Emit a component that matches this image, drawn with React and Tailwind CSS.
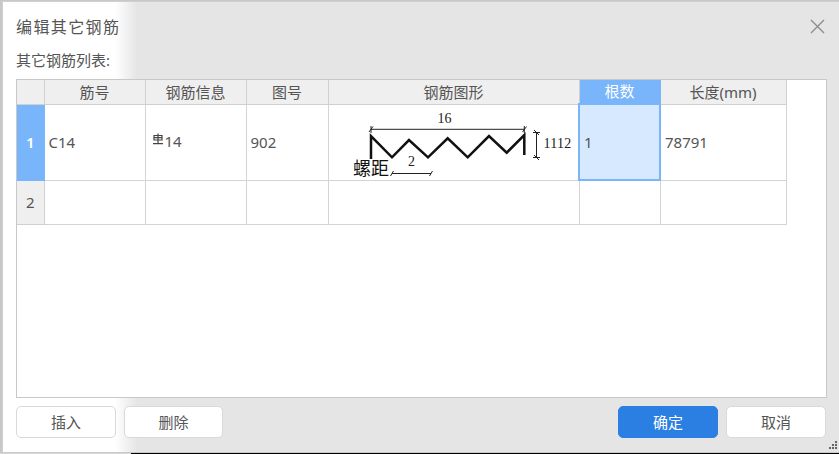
import React from "react";

const font = { fontFamily: '"Noto Sans", "Noto Sans CJK SC", sans-serif' };

const columns = [
  { label: "筋号", width: "w-[101px]" },
  { label: "钢筋信息", width: "w-[101px]" },
  { label: "图号", width: "w-[82px]" },
  { label: "钢筋图形", width: "w-[251px]" },
  { label: "根数", width: "w-[81px]", active: true },
  { label: "长度(mm)", width: "w-[126px]" },
];

const SteelMark = () => (
  <svg width="12" height="12" viewBox="0 0 12 12" className="mr-[1px] ml-[2px] mb-[4px] shrink-0" fill="none" stroke="#444" strokeWidth="1.2">
    <path d="M6 0.5V11M2 2.5H10V7H2V2.5ZM2 4.7H10M1 10.7H11" />
  </svg>
);

const RebarShape = () => (
  <svg viewBox="0 0 250 75" className="ml-[-1px] block h-[75px] w-[250px]" fill="none">
    <path d="M43 54V31L64 52.3L81 35L100 52.3L119.7 33.3L139.7 52.3L161 31L178.7 47.7L196.3 30V50" stroke="#111" strokeWidth="2.5" />
    <path d="M43 24.3H196.3M41 27L45 21.5M194.5 27L198.5 21.5M43 21V28M196.3 21V28" stroke="#222" strokeWidth="1" />
    <path d="M205 27.5H212M205 52.5H212M208.5 27.5V52.5M206 25L211 30M206 50L211 55" stroke="#222" strokeWidth="1" />
    <path d="M64 68.5H103M62.5 71L65.5 66M101.5 71L104.5 66" stroke="#222" strokeWidth="1" />
    <g fill="#222" style={{ fontFamily: '"Liberation Serif", serif' }} fontSize="14">
      <text x="109.5" y="18">16</text>
      <text x="215.5" y="42.5" letterSpacing="0.3">1112</text>
      <text x="80" y="61">2</text>
    </g>
    <text x="25" y="69.5" fill="#111" fontSize="18" style={{ fontFamily: '"Noto Sans CJK SC", sans-serif' }}>螺距</text>
  </svg>
);

const Button = ({ children, primary, className = "" }) => (
  <button
    className={`h-[32px] rounded-[5px] border text-[15px] ${
      primary ? "border-[#2b7fe3] bg-[#2b7fe3] text-white" : "border-[#d9d9d9] bg-white text-[#555]"
    } ${className}`}
  >
    {children}
  </button>
);

const cell = "border-r border-b border-[#d4d4d4] px-[4px] text-left text-[15px] text-[#555]";

export default function App() {
  return (
    <div className="flex h-[454px] w-[839px] flex-col overflow-hidden bg-[#c8c8c8] pt-[1px] pl-[2px]" style={font}>
      <div className="relative flex flex-1 flex-col border-t border-l border-[#d0d0d0] bg-[linear-gradient(90deg,#ffffff_0,#ffffff_112px,#e5e5e5_134px,#e5e5e5_100%)] pr-[13px] pl-[13px]">
        <div className="flex h-[47px] items-center justify-between pt-[2px]">
          <h1 className="text-[16px] tracking-[1.4px] text-[#555]">编辑其它钢筋</h1>
          <svg width="15" height="15" viewBox="0 0 15 15" className="mr-[1px]" fill="none" stroke="#8c8c8c" strokeWidth="1.4">
            <path d="M1 1L14 14M14 1L1 14" />
          </svg>
        </div>
        <p className="flex h-[30px] items-start text-[15px] leading-[22px] text-[#555]">其它钢筋列表:</p>

        <div className="h-[319px] w-[811px] border border-[#c8c8c8] bg-white">
          <table className="w-[769px] table-fixed border-collapse">
            <thead>
              <tr className="h-[24px]">
                <th className="w-[27px] border-r border-b border-[#d0d0d0] bg-[#efefef]" />
                {columns.map((col) => (
                  <th
                    key={col.label}
                    className={`${col.width} border-r border-b text-center text-[15px] font-normal ${
                      col.active
                        ? "border-[#78b5fb] bg-[#78b5fb] text-white"
                        : "border-[#d0d0d0] bg-[#efefef] text-[#555]"
                    }`}
                  >
                    {col.label}
                  </th>
                ))}
              </tr>
            </thead>
            <tbody>
              <tr className="h-[75px]">
                <td className="border-r border-b border-[#78b5fb] bg-[#78b5fb] text-center text-[15px] font-semibold text-white">1</td>
                <td className={cell}>C14</td>
                <td className={cell}>
                  <span className="flex items-center pb-[2px]">
                    <SteelMark />
                    14
                  </span>
                </td>
                <td className={cell}>902</td>
                <td className="border-r border-b border-[#d4d4d4] p-0">
                  <RebarShape />
                </td>
                <td className="border-2 border-[#78b5fb] bg-[#d6e9fe] px-[4px] text-[15px] text-[#555]">1</td>
                <td className={cell}>78791</td>
              </tr>
              <tr className="h-[44px]">
                <td className="border-r border-b border-[#d0d0d0] bg-[#efefef] text-center text-[15px] text-[#555]">2</td>
                <td className={cell} />
                <td className={cell} />
                <td className={cell} />
                <td className={cell} />
                <td className={cell} />
                <td className={cell} />
              </tr>
            </tbody>
          </table>
        </div>

        <div className="mt-[8px] flex justify-between">
          <div className="flex gap-[8px]">
            <Button className="w-[100px]">插入</Button>
            <Button className="w-[99px]">删除</Button>
          </div>
          <div className="flex gap-[8px]">
            <Button primary className="w-[100px]">确定</Button>
            <Button className="w-[100px]">取消</Button>
          </div>
        </div>

        <svg width="8" height="8" viewBox="0 0 8 8" className="absolute right-[2px] bottom-[3px]" fill="#666">
          <path d="M6 0H8V2H6ZM3 3H5V5H3ZM6 3H8V5H6ZM0 6H2V8H0ZM3 6H5V8H3ZM6 6H8V8H6Z" />
        </svg>
      </div>
      <div className="ml-[-2px] flex h-[2px] shrink-0 border-t border-[#c8c8c8]">
        <div className="w-[131px] bg-[#d8d8d8]" />
        <div className="flex-1 bg-black" />
      </div>
    </div>
  );
}
